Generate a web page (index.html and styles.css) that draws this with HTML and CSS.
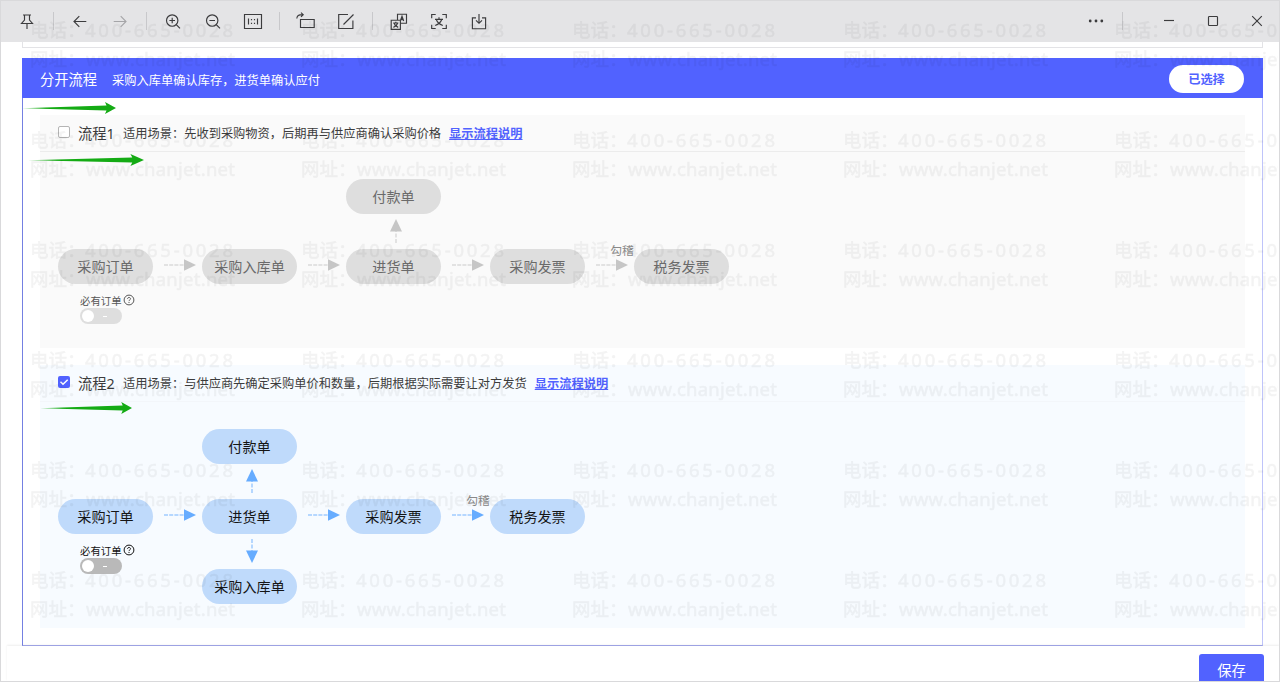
FILE: index.html
```
<!DOCTYPE html>
<html lang="zh-CN">
<head>
    <meta charset="UTF-8">
    <title>流程设置</title>
    <link rel="stylesheet" href="styles.css">
</head>
<body>
<svg class="defs" width="0" height="0">
    <defs>
        <linearGradient id="fadeGreen" x1="0" x2="1" y1="0" y2="0">
            <stop offset="0" stop-color="#14ab14" stop-opacity="0.5"/>
            <stop offset="0.25" stop-color="#14ab14"/>
        </linearGradient>
        <symbol id="mark" viewBox="0 0 94 14" preserveAspectRatio="none">
            <path d="M0 7.3L84.5 4.6L83 1L94 7L83 13L84.5 9.4Z" fill="url(#fadeGreen)"/>
        </symbol>
        <symbol id="arrow" viewBox="0 0 34 14">
            <path d="M1 7h21" stroke="currentColor" stroke-width="1.4" stroke-dasharray="4 1.2" fill="none" opacity="0.6"/>
            <path d="M21 1.2L33 7L21 12.8Z" fill="currentColor"/>
        </symbol>
        <symbol id="arrow-up" viewBox="0 0 14 26">
            <path d="M7 25V12" stroke="currentColor" stroke-width="1.5" stroke-dasharray="4 1.5" fill="none" opacity="0.6"/>
            <path d="M1 13.5L7 1L13 13.5Z" fill="currentColor"/>
        </symbol>
        <symbol id="help" viewBox="0 0 12 12">
            <circle cx="6" cy="6" r="4.9" fill="none" stroke="currentColor"/>
            <path d="M4.5 4.9C4.5 3 7.5 3 7.5 4.8C7.5 5.9 6 5.9 6 7.1M6 8v1" fill="none" stroke="currentColor"/>
        </symbol>
    </defs>
</svg>

<div class="window">
    <div class="toolbar">
        <button><svg viewBox="0 0 20 20"><path d="M6 4h8M7.5 4v5L4.5 12.5h11L12.5 9V4M10 12.5v5.5"/></svg></button>
        <i class="sep"></i>
        <button><svg viewBox="0 0 20 20"><path d="M16.3 10.5H4M9.3 5.2L4 10.5l5.3 5.3"/></svg></button>
        <button class="off"><svg viewBox="0 0 20 20"><path d="M3.7 10.5H16M10.7 5.2l5.3 5.3l-5.3 5.3"/></svg></button>
        <i class="sep"></i>
        <button><svg viewBox="0 0 20 20"><circle cx="9.2" cy="9.5" r="5.7"/><path d="M13.3 13.6l3.7 3.7M6.4 9.5h5.6M9.2 6.7v5.6"/></svg></button>
        <button><svg viewBox="0 0 20 20"><circle cx="9.2" cy="9.5" r="5.7"/><path d="M13.3 13.6l3.7 3.7M6.4 9.5h5.6"/></svg></button>
        <button><svg viewBox="0 0 20 20"><path d="M1.5 3.5h17v14h-17zM5.5 7.5v6M14.5 7.5v6M8.5 8v1.3M8.5 11.8v1.3M11.5 8v1.3M11.5 11.8v1.3"/></svg></button>
        <i class="sep"></i>
        <button><svg viewBox="0 0 20 20"><path d="M4.5 8.5h13.7v8H4.5zM.8 7.5C1 4.5 3.3 3.5 7 3.7M5 1.6L7.2 3.7L5 5.8"/></svg></button>
        <button><svg viewBox="0 0 20 20"><path d="M12 3.5H2.7v14h14.2V9.5M17.5 3.5L7.5 13.5"/></svg></button>
        <i class="sep"></i>
        <button><svg viewBox="0 0 20 20"><path d="M8.5 9.2V3.2h9v9h-6M2.2 9.2h9.2v9.2H2.2zM11.3 10L13 5.3L14.7 10M11.9 8.6h2.2M4.2 12h5.2M6.8 10.7V12M8.7 12C8 14.3 6.6 15.6 4.4 16.4M5 12c.7 2.3 2 3.6 4.2 4.4"/></svg></button>
        <button><svg viewBox="0 0 20 20"><path d="M2.7 7.3V3.5h4M13.3 3.5h4v3.8M17.3 13.7v3.8h-4M6.7 17.5h-4v-3.8M6 8.3h8M10 6.3v2M12.8 8.3C11.8 11.3 9.8 13.3 6.2 14.5M7.2 8.3C8.2 11.3 10.2 13.3 13.8 14.5"/></svg></button>
        <button><svg viewBox="0 0 20 20"><path d="M7 6.8H3.4v10.9h13.2V6.8H13M10 3v9M7 9.3l3 3l3-3"/></svg></button>

        <button class="more"><svg viewBox="0 0 20 20"><circle cx="4.2" cy="10" r="1.4"/><circle cx="10" cy="10" r="1.4"/><circle cx="15.8" cy="10" r="1.4"/></svg></button>
        <i class="sep"></i>
        <div class="controls">
            <button><svg viewBox="0 0 20 20"><path d="M5 9.5h10"/></svg></button>
            <button><svg viewBox="0 0 20 20"><rect x="5.5" y="5.5" width="9" height="9" rx=".8"/></svg></button>
            <button><svg viewBox="0 0 20 20"><path d="M5.2 5.2l9.6 9.6M14.8 5.2l-9.6 9.6"/></svg></button>
        </div>
    </div>

    <div class="content">
        <div class="prev-card"></div>
        <div class="card">
            <div class="card-head">
                <h2>分开流程</h2>
                <span>采购入库单确认库存，进货单确认应付</span>
                <button class="selected">已选择</button>
            </div>

            <div class="process disabled">
                <div class="process-title">
                    <i class="check"></i>
                    <h3>流程1</h3>
                    <p>适用场景：先收到采购物资，后期再与供应商确认采购价格</p>
                    <a>显示流程说明</a>
                </div>
                <div class="flow">
                    <div class="node c3 r1">付款单</div>
                    <svg class="up c3 r2"><use href="#arrow-up"/></svg>
                    <div class="node c1 r3">采购订单</div>
                    <div class="link g1 r3"><svg><use href="#arrow"/></svg></div>
                    <div class="node c2 r3">采购入库单</div>
                    <div class="link g2 r3"><svg><use href="#arrow"/></svg></div>
                    <div class="node c3 r3">进货单</div>
                    <div class="link g3 r3"><svg><use href="#arrow"/></svg></div>
                    <div class="node c4 r3">采购发票</div>
                    <div class="link g4 r3"><span>勾稽</span><svg><use href="#arrow"/></svg></div>
                    <div class="node c5 r3">税务发票</div>
                    <div class="option c1">
                        <div class="option-label">必有订单<svg><use href="#help"/></svg></div>
                        <div class="switch"><i></i><b></b></div>
                    </div>
                </div>
            </div>

            <div class="process active">
                <div class="process-title">
                    <i class="check"><svg viewBox="0 0 12 12"><path d="M2.5 5.8L5 8.3L9.7 3.7"/></svg></i>
                    <h3>流程2</h3>
                    <p>适用场景：与供应商先确定采购单价和数量，后期根据实际需要让对方发货</p>
                    <a>显示流程说明</a>
                </div>
                <div class="flow">
                    <div class="node c2 r1">付款单</div>
                    <svg class="up c2 r2"><use href="#arrow-up"/></svg>
                    <div class="node c1 r3">采购订单</div>
                    <div class="link g1 r3"><svg><use href="#arrow"/></svg></div>
                    <div class="node c2 r3">进货单</div>
                    <div class="link g2 r3"><svg><use href="#arrow"/></svg></div>
                    <div class="node c3 r3">采购发票</div>
                    <div class="link g3 r3"><span>勾稽</span><svg><use href="#arrow"/></svg></div>
                    <div class="node c4 r3">税务发票</div>
                    <div class="option c1">
                        <div class="option-label">必有订单<svg><use href="#help"/></svg></div>
                        <div class="switch"><i></i><b></b></div>
                    </div>
                    <svg class="up down c2 r4"><use href="#arrow-up"/></svg>
                    <div class="node c2 r5">采购入库单</div>
                </div>
            </div>
        </div>
    </div>

    <div class="footer">
        <button class="save">保存</button>
    </div>
</div>

<svg class="mark mark-1"><use href="#mark"/></svg>
<svg class="mark mark-2"><use href="#mark"/></svg>
<svg class="mark mark-3"><use href="#mark"/></svg>

<svg class="watermark">
    <defs>
        <pattern id="wm" x="30" y="15" width="271" height="110" patternUnits="userSpaceOnUse">
            <text x="0" y="22">电话：</text>
            <text x="55" y="22" textLength="148">400-665-0028</text>
            <text x="0" y="51">网址：</text>
            <text x="56" y="51" textLength="149">www.chanjet.net</text>
        </pattern>
    </defs>
    <rect x="0" y="15" width="1278" height="630" fill="url(#wm)"/>
</svg>
</body>
</html>
```
FILE: styles.css
```
* {
    box-sizing: border-box;
}
body {
    margin: 0;
    overflow: hidden;
    font-family: "Noto Sans", "Noto Sans CJK SC", sans-serif;
    font-size: 12.24px;
    color: #3c3c3c;
    background: #fff;
}
h2, h3, p {
    margin: 0;
    font-weight: normal;
}
button {
    padding: 0;
    border: none;
    background: none;
    font-family: inherit;
}
.defs {
    position: absolute;
}
.window {
    display: flex;
    flex-direction: column;
    height: 682px;
    border: 1px solid #d9d9db;
    overflow: hidden;
}

/* toolbar */
.toolbar {
    display: flex;
    align-items: center;
    flex: none;
    height: 41px;
    padding: 0 0 2px 6px;
    background: #e4e4e6;
}
.toolbar button {
    display: flex;
    justify-content: center;
    width: 40px;
}
.toolbar svg {
    width: 20px;
    height: 20px;
    fill: none;
    stroke: #3c3c3e;
    stroke-width: 1.15;
}
.toolbar .off svg {
    stroke: #a5a5a8;
}
.sep {
    width: 1px;
    height: 18px;
    margin: 0 6px;
    background: #c8c8cb;
}
.toolbar .more {
    margin-left: auto;
}
.more circle {
    fill: #3c3c3e;
    stroke: none;
}
.controls {
    display: flex;
    margin-left: 18px;
}
.toolbar .controls button {
    width: 44px;
}

/* content */
.content {
    flex: 1;
    min-height: 0;
    padding: 0 16px 0 21px;
}
.prev-card {
    height: 6px;
    border: 1px solid #e3e3e6;
    border-top: none;
}
.card {
    height: 588px;
    margin-top: 10px;
    border: 1px solid #7480e2;
    border-right-color: #bfc4fa;
    border-bottom-color: #a5abef;
}
.card-head {
    display: flex;
    align-items: center;
    height: 40px;
    margin: -1px -1px 0;
    padding: 3px 19px 0 18px;
    color: #fff;
    background: #5162ff;
}
.card-head h2 {
    margin: -2px 15px 0 0;
    font-size: 14.25px;
}
.selected {
    width: 75px;
    height: 28px;
    margin-top: -1px;
    margin-left: auto;
    border-radius: 14px;
    font-size: 12.24px;
    font-weight: bold;
    color: #5162ff;
    background: #fff;
}
.process {
    margin: 17px 17px 0;
}
.disabled {
    height: 233px;
    background: #fafafa;
}
.active {
    height: 263px;
    background: #f7fbff;
}
.process-title {
    display: flex;
    align-items: center;
    height: 37px;
    padding-left: 18px;
    border-bottom: 1px solid #ececec;
}
.active .process-title {
    border-color: #f3f6fa;
}
.check {
    width: 12px;
    height: 12px;
    margin: -3px 8px 0 0;
    border: 1px solid #b5b5b5;
    border-radius: 2px;
    background: #fff;
}
.active .check {
    border: none;
    background: #5162ff;
}
.check svg {
    display: block;
    fill: none;
    stroke: #fff;
    stroke-width: 1.5;
}
.process-title h3 {
    width: 45px;
    margin-top: -2px;
    font-size: 14.25px;
    white-space: nowrap;
}
.process-title a {
    margin-left: 8px;
    font-weight: bold;
    color: #5162ff;
    text-decoration: underline;
}

/* flow diagram: node columns with arrow columns between them */
.flow {
    display: grid;
    grid-template-columns: 95px 49px 95px 49px 95px 49px 95px 49px 95px;
    grid-template-rows: 35px 35px 35px 35px 35px;
    padding: 27px 0 0 18px;
}
.node {
    display: flex;
    align-items: center;
    justify-content: center;
    padding: 0 0 2px;
    border-radius: 18px;
    font-size: 14.1px;
    white-space: nowrap;
    color: #6a6a6a;
    background: #dedede;
}
.active .node {
    color: #151515;
    background: #bfdafb;
}
.flow svg {
    color: #c6c6c6;
}
.active .flow svg {
    color: #66acff;
}
.link {
    display: flex;
    flex-direction: column;
    align-items: center;
    justify-content: flex-end;
    padding: 0 0 12px 5px;
}
.link svg {
    flex: none;
    width: 34px;
    height: 14px;
}
.link span {
    height: 15px;
    margin-left: 20px;
    font-size: 11.8px;
    line-height: 15px;
    color: #8a8a8a;
}
.up {
    width: 14px;
    height: 26px;
    margin: 4px 0 0 43px;
}
.down {
    transform: rotate(180deg);
}
.option {
    grid-row: 4;
    padding: 9px 0 0 22px;
}
.option-label {
    display: flex;
    align-items: center;
    height: 15px;
    font-size: 10.4px;
    white-space: nowrap;
    color: #555;
}
.active .option-label {
    color: #111;
}
.option-label svg, .active .option-label svg {
    flex: none;
    width: 12px;
    height: 12px;
    margin: -1px 0 0 1px;
    color: inherit;
}
.switch {
    display: flex;
    align-items: center;
    width: 42px;
    height: 16px;
    padding-left: 2px;
    border-radius: 8px;
    background: #dedede;
}
.active .switch {
    background: #b9b9b9;
}
.switch i {
    width: 12px;
    height: 12px;
    border-radius: 50%;
    background: #fff;
}
.switch b {
    width: 4px;
    height: 1px;
    margin-left: 9px;
    background: #fff;
}
.c1 { grid-column: 1; }
.c2 { grid-column: 3; }
.c3 { grid-column: 5; }
.c4 { grid-column: 7; }
.c5 { grid-column: 9; }
.g1 { grid-column: 2; }
.g2 { grid-column: 4; }
.g3 { grid-column: 6; }
.g4 { grid-column: 8; }
.r1 { grid-row: 1; }
.r2 { grid-row: 2; }
.r3 { grid-row: 3; }
.r4 { grid-row: 4; }
.r5 { grid-row: 5; }

/* footer */
.footer {
    display: flex;
    justify-content: flex-end;
    flex: none;
    height: 35px;
    margin-left: 6px;
    padding: 8px 15px 0 0;
    box-shadow: 0 -1px 2px rgba(0, 0, 0, 0.07);
}
.save {
    width: 65px;
    height: 33px;
    padding-bottom: 2px;
    border-radius: 3px;
    font-size: 14.3px;
    color: #fff;
    background: #5162ff;
}

/* green marker arrows over the page */
.mark {
    position: absolute;
    height: 14px;
}
.mark-1 {
    left: 22px;
    top: 101px;
    width: 94px;
}
.mark-2 {
    left: 28px;
    top: 153px;
    width: 116px;
}
.mark-3 {
    left: 40px;
    top: 401px;
    width: 92px;
}

.watermark {
    position: absolute;
    left: 0;
    top: 0;
    width: 1280px;
    height: 682px;
    pointer-events: none;
}
.watermark rect {
    opacity: 0.048;
}
.watermark text {
    font-size: 18.5px;
    fill: #000;
    stroke: #000;
    stroke-width: 0.6;
}
```
